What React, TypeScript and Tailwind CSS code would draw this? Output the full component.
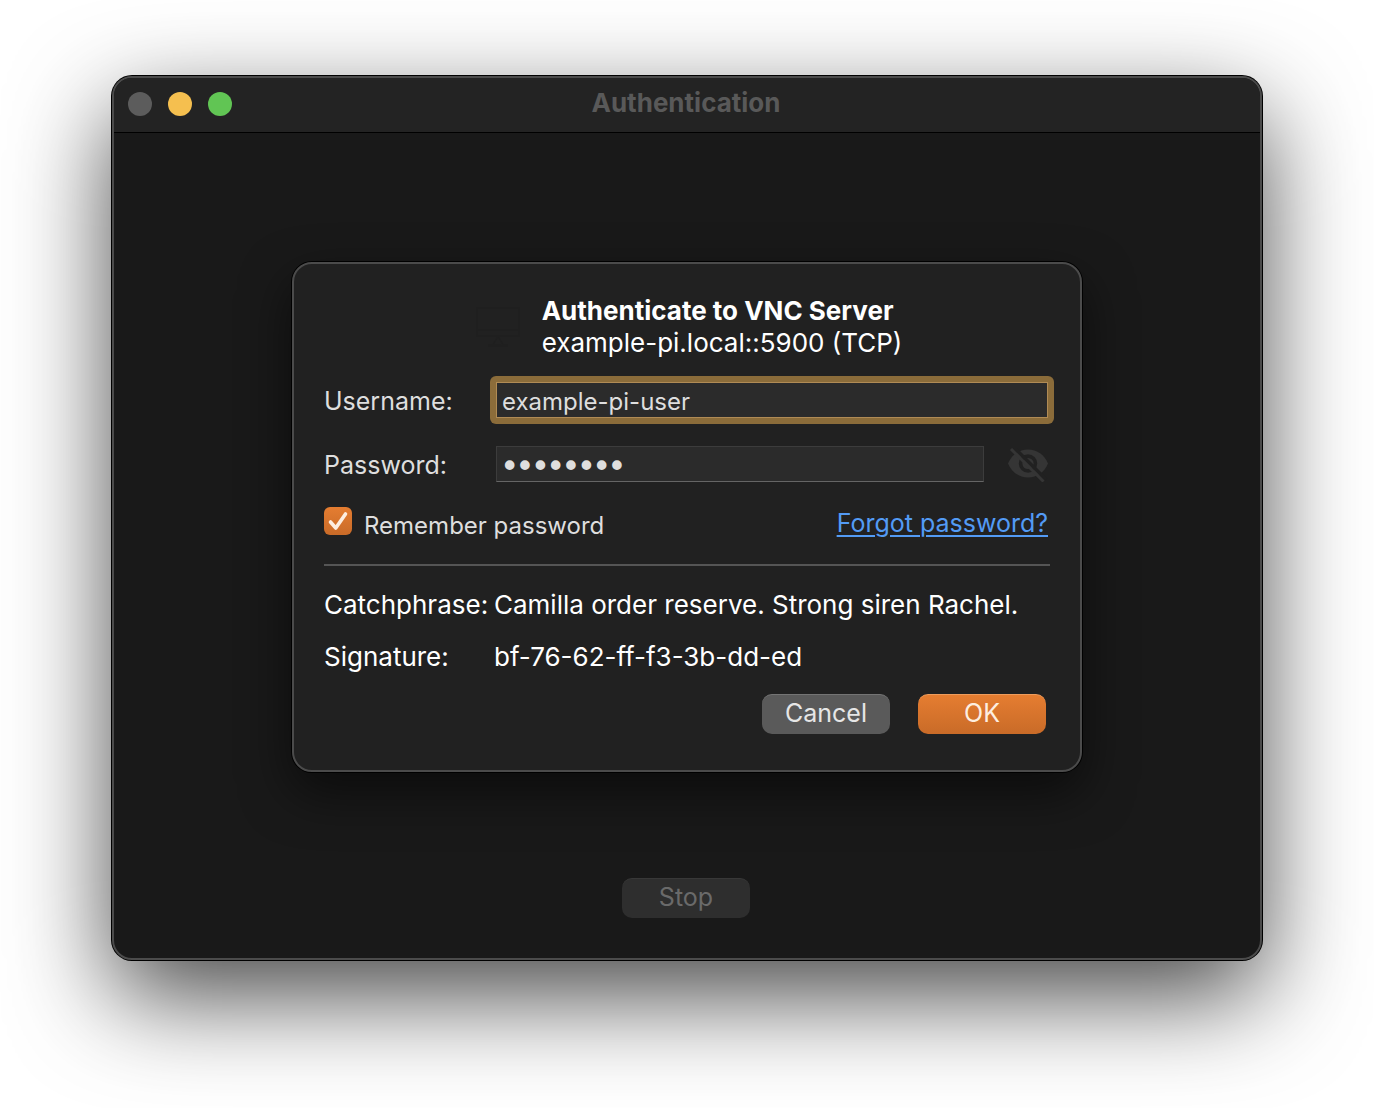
import { useState } from "react";

function MonitorIcon() {
  return (
    <svg viewBox="0 0 44 40" className="h-10 w-11 shrink-0" fill="none" stroke="#1f1f1f" strokeWidth="1.5" aria-hidden="true">
      <path d="M1 1h42v28H1zM1 23h42M22 29l-5 9M22 29l5 9M12 38.5h20" />
    </svg>
  );
}

function EyeOffIcon() {
  return (
    <svg viewBox="0 0 40 34" className="h-[34px] w-10" aria-hidden="true">
      <path d="M20 1.500C11 1.500 3.400 7 0 15.500 3.400 24 11 29.500 20 29.500S36.600 24 40 15.500C36.600 7 29 1.500 20 1.500Z" fill="#353535" />
      <circle cx="20" cy="15.500" r="9.200" fill="#212121" />
      <circle cx="20" cy="15.500" r="5.600" fill="#353535" />
      <path d="M5-1.500 38 31.500" stroke="#212121" strokeWidth="3.500" />
      <path d="M3 1 35.500 33.500" stroke="#353535" strokeWidth="3" />
    </svg>
  );
}

function CheckIcon() {
  return (
    <svg viewBox="0 0 28 28" className="pointer-events-none absolute inset-0 size-7" fill="none" stroke="#fdeee0" strokeWidth="3.600" strokeLinecap="round" strokeLinejoin="round" aria-hidden="true">
      <path d="M6.500 15 11.800 21 21.500 7" />
    </svg>
  );
}

export default function App() {
  const [user, setUser] = useState("example-pi-user");
  const [password, setPassword] = useState("password");
  const [remember, setRemember] = useState(true);

  return (
    <div className="min-h-screen overflow-hidden bg-white px-28 pt-[76px] pb-[148px] font-['Inter',sans-serif] text-[25px] leading-8 text-[#dedede]">
      <main className="overflow-hidden rounded-[20px] border-2 border-[#4b4b4b] bg-[#191919] shadow-[0_0_0_1px_#000,0_36px_100px_rgba(0,0,0,0.72)]">
        <header className="grid grid-cols-[1fr_auto_1fr] items-center border-b border-black bg-[#232323] pr-4 pb-0.5 pl-3.5">
          <div className="flex gap-4">
            <button type="button" aria-label="Close" className="size-6 rounded-full bg-[#5c5c5c]" />
            <button type="button" aria-label="Minimize" className="size-6 rounded-full bg-[#f5bf4f]" />
            <button type="button" aria-label="Zoom" className="size-6 rounded-full bg-[#61c554]" />
          </div>
          <h1 className="pt-[9px] pb-[11px] text-[26px] leading-8 font-bold text-[#595959]">Authentication</h1>
        </header>

        <div className="flex flex-col items-center pt-[129px] pb-10">
          <form
            onSubmit={(e) => e.preventDefault()}
            className="w-full max-w-[790px] rounded-[20px] border-2 border-[#4b4b4b] bg-[#212121] px-[30px] pt-[31px] pb-9 shadow-[0_0_0_1px_#000,0_20px_50px_rgba(0,0,0,0.55)]"
          >
            <div className="flex items-center justify-center gap-[22px] pl-1">
              <MonitorIcon />
              <div className="text-[26px] leading-8 text-white">
                <h2 className="font-bold">Authenticate to VNC Server</h2>
                <p>example-pi.local::5900 (TCP)</p>
              </div>
            </div>

            <div className="mt-[23px] grid grid-cols-[172px_1fr] items-center gap-y-7">
              <label htmlFor="user" className="pt-0.5">Username:</label>
              <div className="-my-1.5 mr-[-4px] -ml-1.5 flex rounded-md bg-[#8b6c3a] p-1.5">
                <input
                  id="user"
                  value={user}
                  onChange={(e) => setUser(e.target.value)}
                  className="h-9 min-w-0 flex-1 border border-[#b08b55] bg-[#2b2b2b] px-[5px] pt-0.5 text-[24px] outline-none"
                />
              </div>
              <label htmlFor="password" className="pt-0.5">Password:</label>
              <div className="flex items-center gap-6 pr-0.5">
                <input
                  id="password"
                  type="password"
                  value={password}
                  onChange={(e) => setPassword(e.target.value)}
                  className="h-9 min-w-0 flex-1 border border-[#3c3c3c] border-b-[#656565] bg-[#2b2b2b] px-[5px] pt-[3px] font-['DejaVu_Sans',sans-serif] text-[26px] outline-none [-webkit-text-stroke:2px_#dedede]"
                />
                <button type="button" aria-label="Show password" className="-mb-0.5">
                  <EyeOffIcon />
                </button>
              </div>
            </div>

            <div className="mt-6 flex items-start justify-between border-b-2 border-[#555] pb-[22px]">
              <label className="flex items-start gap-3">
                <span className="relative mt-px size-7">
                  <input
                    type="checkbox"
                    checked={remember}
                    onChange={(e) => setRemember(e.target.checked)}
                    className="block size-7 appearance-none rounded-md bg-[#5a5a5a] checked:bg-linear-to-b checked:from-[#e57d31] checked:to-[#c96b28]"
                  />
                  {remember && <CheckIcon />}
                </span>
                <span className="pt-1 text-[24px] leading-8">Remember password</span>
              </label>
              <a href="#forgot" className="pt-px pr-0.5 text-[#539bf5]">
                <span className="underline decoration-2 underline-offset-3">Forgot password?</span>
              </a>
            </div>

            <dl className="mt-[23px] grid grid-cols-[170px_1fr] gap-y-5 text-[26px] leading-8 text-white">
              <dt>Catchphrase:</dt>
              <dd>Camilla order reserve. Strong siren Rachel.</dd>
              <dt>Signature:</dt>
              <dd>bf-76-62-ff-f3-3b-dd-ed</dd>
            </dl>

            <div className="mt-[21px] flex justify-end gap-7 pr-1">
              <button type="button" className="h-10 w-32 rounded-[10px] border-t border-[#747474] bg-[#5a5a5a] pb-1 text-[#e6e6e6]">
                Cancel
              </button>
              <button type="submit" className="h-10 w-32 rounded-[10px] border-t border-[#ee9c5c] bg-linear-to-b from-[#e57d31] to-[#c96b28] pb-1 text-[#fdeee0]">
                OK
              </button>
            </div>
          </form>

          <button type="button" className="mt-[106px] mr-0.5 h-10 w-32 rounded-[10px] border-t border-[#383838] bg-[#2e2e2e] pb-1 text-[#6a6a6a]">
            Stop
          </button>
        </div>
      </main>
    </div>
  );
}
